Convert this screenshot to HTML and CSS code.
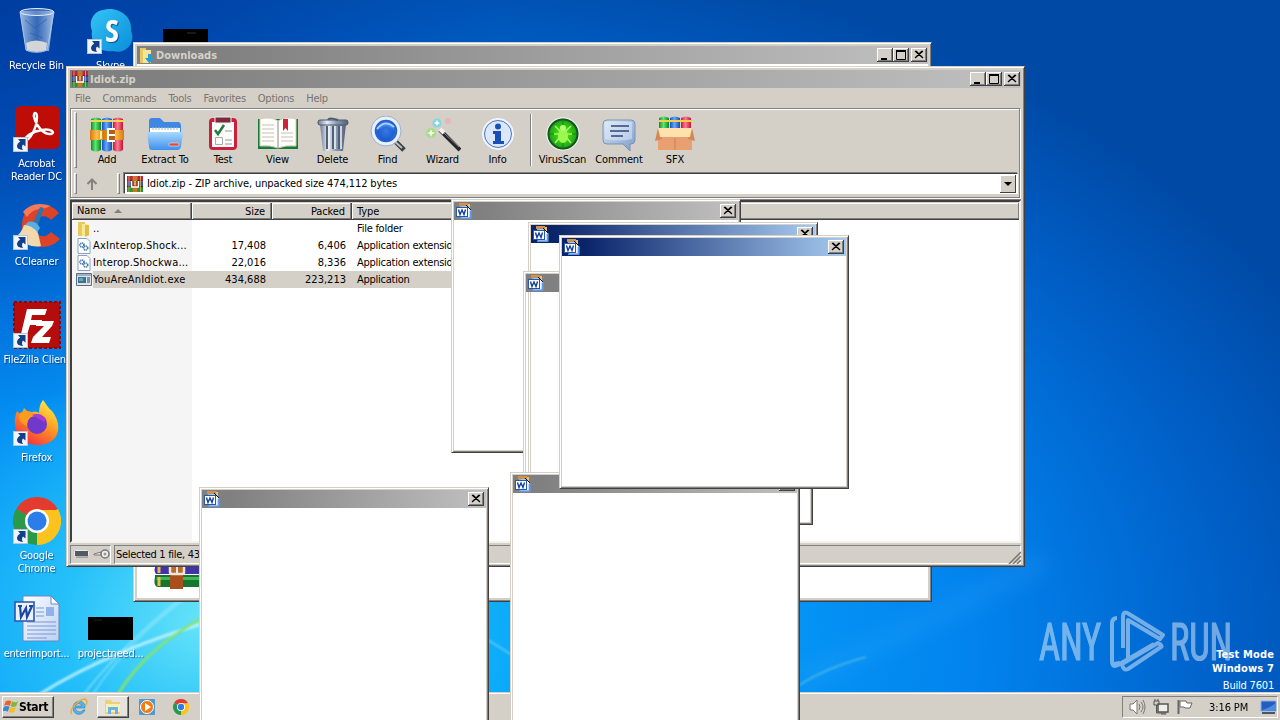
FILE: index.html
```html
<!DOCTYPE html>
<html lang="en">
<head>
<meta charset="utf-8">
<title>Desktop</title>
<link rel="stylesheet" href="styles.css">
</head>
<body>
<svg class="defs" width="0" height="0">
  <defs>
    <linearGradient id="gGreen"><stop offset="0" stop-color="#178a35"/><stop offset=".45" stop-color="#5bea6b"/><stop offset="1" stop-color="#12802c"/></linearGradient>
    <linearGradient id="gBlue"><stop offset="0" stop-color="#1c50c0"/><stop offset=".45" stop-color="#63a8ff"/><stop offset="1" stop-color="#1a48ae"/></linearGradient>
    <linearGradient id="gRed"><stop offset="0" stop-color="#c81838"/><stop offset=".45" stop-color="#ff7b92"/><stop offset="1" stop-color="#c01534"/></linearGradient>
    <linearGradient id="gBelt"><stop offset="0" stop-color="#d8780f"/><stop offset=".2" stop-color="#ffc04a"/><stop offset=".4" stop-color="#d8780f"/><stop offset=".75" stop-color="#ffbc48"/><stop offset="1" stop-color="#d8780f"/></linearGradient>
    <linearGradient id="gFolder" x2="0" y2="1"><stop offset="0" stop-color="#a9daff"/><stop offset="1" stop-color="#3f8fee"/></linearGradient>
    <linearGradient id="gSteel"><stop offset="0" stop-color="#6d7b92"/><stop offset=".3" stop-color="#e7edf4"/><stop offset=".6" stop-color="#8f9db3"/><stop offset="1" stop-color="#536078"/></linearGradient>
    <linearGradient id="gSkype" x2="1" y2="1"><stop offset="0" stop-color="#34c4f4"/><stop offset="1" stop-color="#0a8ddb"/></linearGradient>
    <linearGradient id="gFox" x1=".8" x2=".2" y2="1"><stop offset="0" stop-color="#fff14a"/><stop offset=".45" stop-color="#ff9a22"/><stop offset="1" stop-color="#f5273f"/></linearGradient>
    <radialGradient id="gLens"><stop offset="0" stop-color="#5fa6ff"/><stop offset="1" stop-color="#1450c8"/></radialGradient>
    <radialGradient id="gVirus"><stop offset="0" stop-color="#5cf020"/><stop offset="1" stop-color="#129a0c"/></radialGradient>
    <linearGradient id="gBin" x2="1"><stop offset="0" stop-color="#c8dcf2" stop-opacity=".8"/><stop offset=".5" stop-color="#5f8cc8" stop-opacity=".55"/><stop offset="1" stop-color="#d4e4f6" stop-opacity=".8"/></linearGradient>
    <linearGradient id="gNote" x2="1" y2="1"><stop offset="0" stop-color="#dce7f5"/><stop offset="1" stop-color="#7c9bc8"/></linearGradient>
    <linearGradient id="gDoc" x2="1" y2="1"><stop offset="0" stop-color="#fff"/><stop offset="1" stop-color="#bcd0f2"/></linearGradient>
  </defs>
  <symbol id="shortcut" viewBox="0 0 15 15"><rect x=".5" y=".5" width="14" height="14" fill="#f1f4f9" stroke="#b8c4d8"/><path d="M5 2h7.500v7.500L10 7.500Q8 10 10 13 3.500 12.500 4 8.500 4.500 6 7.200 4.500z" fill="#123f88"/></symbol>
  <symbol id="close" viewBox="0 0 16 14"><path d="M4 3l8 7M5 3l7 7M12 3l-8 7M11 3l-7 7" stroke="#000" stroke-width="1.100"/></symbol>
  <symbol id="min" viewBox="0 0 16 14"><path d="M4 10h6v2H4z"/></symbol>
  <symbol id="max" viewBox="0 0 16 14"><path d="M3.500 3v8.500h9V3z" fill="none" stroke="#000"/><path d="M3 2h10v2H3z"/></symbol>
  <symbol id="word" viewBox="0 0 16 16"><path d="M4 1h10v12H4z" fill="#efbf6c"/><path d="M3 0h9v3H3z" fill="#d8913d"/><path d="M5 3h6l4 4v8H5z" fill="#edf4ff" stroke="#6e97d6"/><path d="M10 2l5 5" stroke="#111"/><path d="M14.500 8v7.500H4" fill="none" stroke="#5f9ae6" stroke-width="1.600"/><rect x=".5" y="4.500" width="11" height="9" fill="#fff" stroke="#2857ad"/><path d="M2.500 6.500l1.500 5 2-4.500 2 4.500 1.500-5" fill="none" stroke="#123f9c" stroke-width="1.400"/></symbol>
  <symbol id="rar" viewBox="0 0 16 16"><path fill="#b92446" d="M0 0h16v5H0z"/><path fill="#2d57c4" d="M0 5.500h16v5H0z"/><path fill="#22963c" d="M0 11h16v5H0z"/><path fill="#4c1630" d="M0 4.500h16v1H0zM0 10h16v1H0z"/><path fill="#c9762a" d="M5.500 0h5v16h-5z"/><path d="M2 0v16M13.500 0v16" stroke="#e9b14b" stroke-width=".8"/><path d="M4.500 5v6h7V5" fill="#9c4c17" stroke="#fff" stroke-width="1.300"/><path d="M8 5v4.500" stroke="#fff"/></symbol>
  <symbol id="dll" viewBox="0 0 14 16"><path d="M1 .5h9l3 3v12H1z" fill="#fff" stroke="#8ba0bd"/><g fill="none" stroke="#4076b2" stroke-width="1.700" stroke-dasharray="1.200 .5"><circle cx="5" cy="7" r="2"/><circle cx="8.700" cy="10" r="2"/></g></symbol>
  <symbol id="exe" viewBox="0 0 16 13"><path d="M.5.500h15v12H.500z" fill="#dce3ea" stroke="#5e6e80"/><path d="M1 1h14v2H1z" fill="#9cb2cc"/><path d="M2 4h8v6H2z" fill="#3c7296"/><path d="M3 5h4v3H3z" fill="#6aab9f"/><path d="M11 4h3v6h-3z" fill="#8390a6"/></symbol>
  <symbol id="folder" viewBox="0 0 14 16"><path d="M1 1h7v14H1z" fill="#e9c95b"/><path d="M5 3h6l1 2v10H5z" fill="#f8e795"/><path d="M8 4h4v10l-4 2z" fill="#e2bd4c"/></symbol>
  <symbol id="chrome" viewBox="0 0 48 48"><path d="M24 24L3.200 12A24 24 0 0 1 44.800 12z" fill="#e33b2e"/><path d="M24 24l20.800-12A24 24 0 0 1 24 48z" fill="#fcc31e"/><path d="M24 24v24A24 24 0 0 1 3.200 12z" fill="#2a9a48"/><path d="M24 13h21a24 24 0 0 1-21 35l9.500-18.500z" fill="#fcc31e"/><path d="M3.200 12L14.500 29.500l9.500 5L24 48z" fill="#2a9a48"/><circle cx="24" cy="24" r="12" fill="#fff"/><circle cx="24" cy="24" r="9.500" fill="#2b7de9"/></symbol>
</svg>

<main class="desktop">
  <svg class="wallpaper" viewBox="0 0 1280 720">
    <defs><filter id="soft"><feGaussianBlur stdDeviation="1"/></filter><filter id="wide" x="-50%" y="-50%" width="200%" height="200%"><feGaussianBlur stdDeviation="9"/></filter></defs>
    <path d="M800 680Q890 640 1045 560" stroke="#3fb2ff" stroke-width="24" opacity=".15" fill="none" filter="url(#wide)"/>
    <g fill="none" filter="url(#soft)">
      <path d="M40 694Q110 650 215 620" stroke="#c7f4ff" stroke-width="3" opacity=".85"/>
      <path d="M84 694Q130 635 205 580" stroke="#b0f0ff" stroke-width="1.500" opacity=".7"/>
      <path d="M93 694Q128 640 190 595" stroke="#b0f0ff" stroke-width="1.500" opacity=".6"/>
      <path d="M118 694Q150 642 215 612" stroke="#84e26e" stroke-width="3"/>
      <path d="M488 640L512 655" stroke="#c7f4ff" stroke-width="2" opacity=".4"/>
      <path d="M798 686Q825 668 866 657" stroke="#7fd6e0" stroke-width="1.500" opacity=".6"/>
    </g>
  </svg>

  <section class="icons">
    <div class="shortcut r1 c1"><svg width="48" height="48"><path d="M7 4h34l-5 40H13z" fill="url(#gBin)"/><ellipse cx="24" cy="5" rx="17" ry="3.500" fill="#9fbfe2" fill-opacity=".4" stroke="#e2eefa"/><path d="M7 5l6 38c5 3 16 3 21 0l7-38" fill="none" stroke="#a9c6e8"/><path d="M13 36q10-5 21 0l-1 7q-9 4-19 0z" fill="#e3e0db" opacity=".9"/><path d="M12 13l10 8 12-9M17 26l13 5" stroke="#275a9e" fill="none" opacity=".6"/></svg><span>Recycle Bin</span></div>
    <div class="shortcut r1 c2"><svg width="48" height="48"><path d="M16 3C27-1 46 6 44 24c5 10-4 24-18 20C12 46 3 36 5 24 1 14 7 4 16 3z" fill="url(#gSkype)"/><text x="25" y="35" font-family="Open Sans" font-weight="700" font-size="31" text-anchor="middle" fill="#fff">S</text><use href="#shortcut" x="0" y="32" width="15" height="15"/></svg><span>Skype</span></div>
    <div class="shortcut r1 c3"><svg width="48" height="48"><path d="M2 22h45v23H2z" fill="#000"/><path d="M26 26h9" stroke="#333"/></svg></div>
    <div class="shortcut r2 c1"><svg width="48" height="48"><rect x="2" y="1" width="45" height="43" rx="6" fill="#bd0d06"/><path d="M12 36c5-1 12-13 12-24 0-6-4-5-3 0 2 8 9 18 17 17 5-1 0-6-9-4-9 1-18 7-17 11z" fill="none" stroke="#fff" stroke-width="2.400"/><use href="#shortcut" y="32" width="15" height="15"/></svg><span>Acrobat<br>Reader DC</span></div>
    <div class="shortcut r3 c1"><svg width="48" height="48"><path d="M46 10C35-4 10-1 9 21c-1 25 26 29 38 15l-9-7c-7 8-17 4-16-7 1-10 11-11 16-5z" fill="#dc4329"/><path d="M10 9q10-12 28-6l-8 3q-10-1-16 8z" fill="#f57a58"/><path d="M27 4l4 1-6 17-5-2z" fill="#2c75ae"/><path d="M15 19q8-2 12 6l-3 5-12-8z" fill="#58aee0"/><path d="M11 22q8 0 14 8l3 13q-11 3-26-9 6-3 9-12z" fill="#f2d8ac"/><use href="#shortcut" y="32" width="15" height="15"/></svg><span>CCleaner</span></div>
    <div class="shortcut r4 c1"><svg width="48" height="48"><rect x="1" y="1" width="46" height="46" fill="#b50d0b" stroke="#8c0708" stroke-width="2" stroke-dasharray="3 2"/><path d="M14 8h20l-2 6H19l-1 5h11l-1 5H17l-4 13H7z" fill="#fff"/><path d="M24 20h17l-2 5-10 11h9l-2 6H18l2-6 11-11h-8z" fill="#fff"/><use href="#shortcut" y="32" width="15" height="15"/></svg><span>FileZilla Client</span></div>
    <div class="shortcut r5 c1"><svg width="48" height="48"><path d="M30 1c4 5 5 8 9 11 13 17 5 34-14 34C7 46-3 29 4 12l4 4 3-7 5 5q7-3 10 0 0-8 4-13z" fill="url(#gFox)"/><circle cx="24" cy="25" r="10" fill="#7138cc"/><path d="M6 15c6-5 13-3 17 2-6 0-9 4-9 10-5-2-9-6-8-12z" fill="#ff9b21"/><path d="M19 16q7-3 14 4l-2 3q-6-4-12-7z" fill="#a93ad6"/><use href="#shortcut" y="32" width="15" height="15"/></svg><span>Firefox</span></div>
    <div class="shortcut r6 c1"><svg width="48" height="48"><use href="#chrome" width="48" height="48"/><use href="#shortcut" y="32" width="15" height="15"/></svg><span>Google<br>Chrome</span></div>
    <div class="shortcut r7 c1"><svg width="48" height="48"><path d="M10 1h28l8 8v37H10z" fill="url(#gDoc)" stroke="#6d87bd"/><path d="M38 1v8h8z" fill="#fff" stroke="#6d87bd"/><path d="M23 13h8M23 17h8M23 21h8M14 27h29M14 31h29M14 35h29M14 39h29M14 43h20" stroke="#7697d8"/><path d="M33 12h8v9h-8z" fill="#8fb2e8"/><path d="M2 7h19v19H2z" fill="#e9f0ff" stroke="#2a57ae" stroke-width="1.600"/><path d="M5 11h4M7 11l1 11 5-9 1 9 5-11h-3" fill="none" stroke="#1d479d" stroke-width="2.200"/></svg><span>enterimport...</span></div>
    <div class="shortcut r7 c2"><svg width="48" height="48"><path d="M1 22h45v23H1z" fill="#000"/><path d="M7 25h8" stroke="#222"/></svg><span>projectneed...</span></div>
  </section>

  <svg class="watermark" width="204" height="66" viewBox="0 0 204 66">
    <g fill="#fff" stroke="#fff" stroke-width="1.200" font-family="Roboto" font-size="52"><text x="1" y="51" textLength="62" lengthAdjust="spacingAndGlyphs">ANY</text><text x="132" y="51" textLength="62" lengthAdjust="spacingAndGlyphs">RUN</text></g>
    <path d="M79 9q-5 0-5 6v37q0 7 6 4l36-21M85 39V8q0-7 6-3l34 21-3 4-32-19v39M76 55l6-1M84 55l36-21q5 3 3 4L90 60q-5 2-6-5z" fill="none" stroke="#fff" stroke-width="4" stroke-linejoin="round"/>
  </svg>
  <div class="build"><b>Test Mode</b><b>Windows 7</b><span>Build 7601</span></div>

  <footer class="taskbar">
    <div class="start"><svg width="16" height="16" viewBox="0 0 17 16"><path d="M3 2q3-2 6 0L7 7Q4 5 1 7z" fill="#ee6322"/><path d="M10 2q3 2 6 0l-2 5q-3 2-6 0z" fill="#82b83a"/><path d="M1 8q3-2 6 0l-2 5q-3-2-6 0z" fill="#3a86d8"/><path d="M8 8q3 2 6 0l-2 5q-3 2-6 0z" fill="#f7bd26"/></svg>Start</div>
    <div class="task"><svg width="18" height="18" viewBox="0 0 18 18"><path d="M15 10H5q1 4 5 4 2 0 3-2h2c-3 7-12 5-12-2C3 1 16 1 15 10zM5 8h7q-3-5-7 0z" fill="#55b4ea" stroke="#257fc0" stroke-width=".6"/><path d="M2 16Q-1 14 4 8 10 1 15 1q4 2 0 7" fill="none" stroke="#e4ae34" stroke-width="1.400"/></svg></div>
    <div class="task active"><svg width="18" height="16"><path d="M1 1h6l1 2h8v12H1z" fill="#ecd177"/><path d="M2 5h14v8H2z" fill="#faf0b5"/><path d="M4 8h10v7h-3v-4H7v4H4z" fill="#66b5e6"/></svg></div>
    <div class="task"><svg width="16" height="16"><rect width="16" height="16" rx="1" fill="#4d9bd6"/><circle cx="8" cy="8" r="6.500" fill="#f47b11" stroke="#fff"/><path d="M6 4l6 4-6 4z" fill="#fff"/></svg></div>
    <div class="task"><svg width="16" height="16"><use href="#chrome" width="16" height="16"/></svg></div>
    <div class="tray">
      <svg width="17" height="16" fill="none" stroke="#777"><path d="M1 5h3l4-4v14l-4-4H1z" fill="#fff"/><path d="M10 5q2 3 0 6M12 3q4 5 0 10M14 1q4 7 0 14"/></svg>
      <svg width="17" height="16" fill="none" stroke="#555"><path d="M5 5h10v8H5z" fill="#eee" stroke-width="1.500"/><path d="M1 2h5v4H1zM2 0v2M5 0v2M3.500 6v8h10M8 15h5" /></svg>
      <svg width="17" height="16" fill="#fff" stroke="#666"><path d="M1.500 1v14" stroke-width="2"/><path d="M3 2h6l1 2h5l-2 5H8L7 8H3z"/></svg>
      <time>3:16 PM</time>
      <svg width="17" height="15"><path d="M1 1h15v10H1z" fill="#245dc0" stroke="#8ab0e8"/><path d="M1 10q7-1 15-7v8H1z" fill="#4d8bdc"/><path d="M2 12h13v2H2z" fill="#4d5563"/></svg>
    </div>
  </footer>

  <section class="window downloads">
    <header class="title gray"><svg width="15" height="17"><path d="M1 1h6v15H1z" fill="#e6c962"/><path d="M4 3h8v13H4z" fill="#f6e591"/><path d="M9 7h3v4h3l-4.500 5.500L6 11h3z" fill="#259bd8"/></svg><b>Downloads</b><i class="btn"><svg><use href="#min"/></svg></i><i class="btn"><svg><use href="#max"/></svg></i><i class="btn x"><svg><use href="#close"/></svg></i></header>
    <div class="folderview"><svg width="52" height="48" viewBox="0 0 52 48"><path d="M1 1h50v20H1z" fill="#9a2848"/><path d="M0 20h51v11H2q-3-4 0-9z" fill="#4232ac"/><path d="M1 32h50v12H4q-5-1-3-10z" fill="#16752e"/><path d="M3 34h48v3H2z" fill="#43b557"/><path d="M5 21h0v9M5 34v9" stroke="#e9bd4f" stroke-width="3"/><path d="M16 20h13v26H16z" fill="#a84f1d"/><rect x="16" y="22" width="14" height="9" rx="2" fill="#b9692c" stroke="#eee8d8" stroke-width="2.500"/><path d="M23 24v6" stroke="#eee8d8" stroke-width="2"/></svg></div>
  </section>

  <section class="window archive">
    <header class="title gray"><svg width="16" height="16"><use href="#rar"/></svg><b>Idiot.zip</b><i class="btn"><svg><use href="#min"/></svg></i><i class="btn"><svg><use href="#max"/></svg></i><i class="btn x"><svg><use href="#close"/></svg></i></header>
    <nav class="menu"><span>File</span><span>Commands</span><span>Tools</span><span>Favorites</span><span>Options</span><span>Help</span></nav>
    <div class="bars">
      <div class="toolbar">
        <i class="grip"></i>
        <div class="tool w54"><svg width="36" height="36"><path d="M2 3q5-3 10 0v31q-5 3-10 0z" fill="url(#gGreen)"/><path d="M13 3q5-3 10 0v31q-5 3-10 0z" fill="url(#gBlue)"/><path d="M24 3q5-3 10 0v31q-5 3-10 0z" fill="url(#gRed)"/><path d="M2 5h10M13 5h10M24 5h10" stroke="#f4d34e" stroke-width="2"/><path d="M1 14h34v10H1z" fill="url(#gBelt)"/><path d="M12 15v8" stroke="#fff3b0" stroke-width="2"/><path d="M26 13h-7v12h7" fill="#b06114" stroke="#fff" stroke-width="2"/><path d="M20 19h6" stroke="#fff" stroke-width="2"/></svg><span>Add</span></div>
        <div class="tool w62"><svg width="36" height="36"><path d="M2 10V5q0-3 3-3h8l4 4h14q3 0 3 4v20H2z" fill="#3f87e4"/><path d="M3 12h30v14H3z" fill="#fff"/><path d="M6 11v3M9 11v3M12 11v3M15 11v3M18 11v3M21 11v3M24 11v3M27 11v3M30 11v3" stroke="#9bb"/><path d="M0 16h36l-2 15q-1 3-3 3H5q-3 0-3-3z" fill="url(#gFolder)"/><rect x="22" y="27" width="10" height="3" rx="1" fill="#e24a36" stroke="#fff" stroke-width=".5"/></svg><span>Extract To</span></div>
        <div class="tool w54"><svg width="36" height="36"><rect x="4" y="2" width="28" height="32" rx="4" fill="#c9203c"/><path d="M7 6h22v25H7z" fill="#fbfbfa"/><path d="M10 1h16v6H10z" fill="#7c2b3b" stroke="#eee"/><path d="M10 14l3 4 6-9" fill="none" stroke="#237b3e" stroke-width="2.500"/><path d="M20 15h7M20 24h7M20 28h7" stroke="#999"/><path d="M10.500 21.500h7v7h-7z" fill="#fff" stroke="#aaa"/></svg><span>Test</span></div>
        <div class="tool w55"><svg width="42" height="36" viewBox="0 0 42 36"><path d="M1 3h40v30H1z" fill="#167c3c"/><path d="M3 3q11-3 18 2 7-5 18-2v27q-11-1-18 2-7-3-18-2z" fill="#fffefa" stroke="#d8ccb2"/><path d="M21 5v27" stroke="#888"/><path d="M5 9h12M5 13h12M5 17h12M5 21h12M5 25h12M24 17h12M24 21h12M24 25h12" stroke="#c5c0b9"/><path d="M26 3h5v12l-2.500-3-2.500 3z" fill="#cd243b"/></svg><span>View</span></div>
        <div class="tool w55"><svg width="36" height="36"><path d="M5 8h26l-3 27H8z" fill="url(#gSteel)"/><path d="M12 10v23M18 10v23M24 10v23" stroke="#506076" stroke-width="2"/><path d="M14 10v23M20 10v23M26 10v23" stroke="#edf3f8" stroke-width="1.500"/><rect x="3" y="4" width="30" height="5" rx="2" fill="url(#gSteel)" stroke="#4d5b72"/><path d="M13 4q1-3 10 0" fill="none" stroke="#4d5b72" stroke-width="2"/></svg><span>Delete</span></div>
        <div class="tool w55"><svg width="36" height="36"><path d="M24 24l10 10" stroke="#3c4047" stroke-width="5"/><path d="M23 24l9 8" stroke="#b6bdc5" stroke-width="2"/><circle cx="16" cy="15" r="13" fill="url(#gLens)" stroke="#e8f0fa" stroke-width="3.500"/><circle cx="16" cy="15" r="15" fill="none" stroke="#9eb1c9"/><path d="M7 16q9-11 18 0-4 10-11 9-5-2-7-9z" fill="#0d4bc6" opacity=".5"/><path d="M7 13q8-10 17-2" stroke="#a6ceff" stroke-width="2" fill="none"/></svg><span>Find</span></div>
        <div class="tool w55"><svg width="36" height="36"><path d="M15 14l20 20" stroke="#28282c" stroke-width="4"/><path d="M15 13l4 4" stroke="#f0f0ef" stroke-width="4"/><path d="M19 17l15 14" stroke="#85868b"/><circle cx="6" cy="17" r="5" fill="#82e850" opacity=".55"/><circle cx="12" cy="7" r="4.500" fill="#51daf4" opacity=".6"/><circle cx="23" cy="5" r="3" fill="#f69eae" opacity=".55"/><path d="M6 13l1 3 3 1-3 1-1 3-1-3-3-1 3-1zM12 4l1 2 2 1-2 1-1 2-1-2-2-1 2-1z" fill="#fff"/></svg><span>Wizard</span></div>
        <div class="tool w55"><svg width="36" height="36"><circle cx="18" cy="18" r="15.500" fill="#e7edfa" stroke="#f8faff" stroke-width="1"/><circle cx="18" cy="18" r="13.500" fill="#dbe7fa" stroke="#4875d0"/><circle cx="18" cy="10.500" r="3" fill="#194fb6"/><path d="M13 15h8v10h3v3H13v-3h2v-7h-2z" fill="#194fb6"/></svg><span>Info</span></div>
        <i class="split"></i>
        <div class="tool w55"><svg width="36" height="36"><circle cx="18" cy="18" r="16" fill="url(#gVirus)" stroke="#e9f4e8" stroke-width="1.500"/><circle cx="18" cy="18" r="14.500" fill="none" stroke="#19532a" stroke-width="2"/><path d="M5 18h26M18 5v26" stroke="#0d8b0e"/><path d="M10 10l5 5M26 10l-5 5M9 18h6M27 18h-6M10 27l5-6M26 27l-5-6" stroke="#a7ff67" stroke-width="1.500"/><ellipse cx="18" cy="20" rx="5" ry="7" fill="#9bf94e"/><circle cx="18" cy="12" r="3" fill="#b7ff75"/></svg><span>VirusScan</span></div>
        <div class="tool w58"><svg width="36" height="36"><path d="M6 4h24q4 0 4 4v16q0 4-4 4h-1v7l-7-7H6q-4 0-4-4V8q0-4 4-4z" fill="url(#gNote)" stroke="#7993ba"/><path d="M4 7q4-3 27-1v17q-13 3-27 0z" fill="#e2ecfa" opacity=".5"/><path d="M10 10h18M9 15h19M10 20h12" stroke="#2f4778" stroke-width="1.500"/></svg><span>Comment</span></div>
        <div class="tool w54"><svg width="40" height="36" viewBox="0 0 40 36"><path d="M4 2q5-3 10 0v12H4z" fill="url(#gGreen)"/><path d="M15 2q5-3 10 0v12H15z" fill="url(#gBlue)"/><path d="M26 2q5-3 10 0v12H26z" fill="url(#gRed)"/><path d="M4 5h32" stroke="#f6d044" stroke-width="2"/><path d="M3 12h34v22H3z" fill="#e9a071"/><path d="M3 12L0 25l7-2M37 12l3 13-7-2" fill="#d38656"/><path d="M3 12h34l-2 9H5z" fill="#ffe1ad"/><path d="M20 22v12" stroke="#c68055"/></svg><span>SFX</span></div>
      </div>
      <div class="address">
        <i class="grip"></i><svg class="up" width="14" height="14"><path d="M7 13V3M2.500 7L7 2.500 11.500 7" fill="none" stroke="#85827d" stroke-width="2"/></svg><i class="grip second"></i>
        <div class="combo"><svg width="16" height="16"><use href="#rar"/></svg><span>Idiot.zip - ZIP archive, unpacked size 474,112 bytes</span><i class="drop"></i></div>
      </div>
    </div>
    <div class="list">
      <div class="row head"><span>Name<i class="sort"></i></span><span>Size</span><span>Packed</span><span>Type</span></div>
      <div class="row"><span><svg width="14" height="16"><use href="#folder"/></svg>..</span><span></span><span></span><span>File folder</span></div>
      <div class="row"><span><svg width="14" height="16"><use href="#dll"/></svg>AxInterop.Shock...</span><span>17,408</span><span>6,406</span><span>Application extension</span></div>
      <div class="row"><span><svg width="14" height="16"><use href="#dll"/></svg>Interop.Shockwa...</span><span>22,016</span><span>8,336</span><span>Application extension</span></div>
      <div class="row selected"><span><svg width="16" height="13"><use href="#exe"/></svg>YouAreAnIdiot.exe</span><span>434,688</span><span>223,213</span><span>Application</span></div>
    </div>
    <div class="status"><div class="cell marks"><svg width="16" height="10"><rect x=".5" y="1.500" width="14" height="6" rx="1" fill="#525b60" stroke="#eee"/><path d="M2 8h12" stroke="#777"/></svg><svg width="17" height="12"><path d="M1 6l7-2v3H1z" fill="#eee" stroke="#777"/><circle cx="12" cy="6" r="4" fill="#eee" stroke="#777" stroke-width="1.500"/><circle cx="12" cy="6" r="1.500" fill="#999"/></svg></div><div class="cell">Selected 1 file, 434,688 bytes</div><svg class="resize" width="13" height="13"><path d="M1 13L13 1M5 13l8-8M9 13l4-4" stroke="#77736e" stroke-width="1.500"/></svg></div>
  </section>

  <section class="window popup pa"><header class="title gray"><svg width="16" height="16"><use href="#word"/></svg><i class="btn x"><svg><use href="#close"/></svg></i></header></section>
  <section class="window popup pb"><header class="title blue"><svg width="16" height="16"><use href="#word"/></svg><i class="btn x"><svg><use href="#close"/></svg></i></header></section>
  <section class="window popup pc"><header class="title gray"><svg width="16" height="16"><use href="#word"/></svg><i class="btn x"><svg><use href="#close"/></svg></i></header><div class="ghost"></div></section>
  <section class="window popup pd"><header class="title gray"><svg width="16" height="16"><use href="#word"/></svg><i class="btn x"><svg><use href="#close"/></svg></i></header></section>
  <section class="window popup pe"><header class="title gray"><svg width="16" height="16"><use href="#word"/></svg><i class="btn x"><svg><use href="#close"/></svg></i></header></section>
  <section class="window popup pf"><header class="title blue"><svg width="16" height="16"><use href="#word"/></svg><i class="btn x"><svg><use href="#close"/></svg></i></header></section>
</main>
</body>
</html>
```
FILE: styles.css
```css
* { box-sizing: border-box; }
body { margin: 0; font: 11px/13px "DejaVu Sans Condensed", "DejaVu Sans", sans-serif; font-stretch: condensed; letter-spacing: -0.3px; color: #000; }
svg { display: block; flex: none; }
i { display: block; font-style: normal; }
.defs { position: absolute; }
.desktop {
  position: relative; width: 1280px; height: 720px; overflow: hidden;
  background:
    radial-gradient(ellipse 500px 420px at 0 0, rgba(0,56,158,.75), rgba(0,56,158,.55) 40%, rgba(0,70,180,0) 100%),
    radial-gradient(ellipse 330px 260px at 210px 620px, rgba(110,232,248,.95), rgba(50,205,250,.7) 45%, rgba(0,160,250,0) 100%),
    radial-gradient(ellipse 1060px 700px at 360px 640px, #08adfc 0%, #069ff9 30%, #0283ee 58%, #0060c8 82%, #004aa6 100%);
}
.wallpaper { position: absolute; inset: 0; width: 1280px; height: 720px; }

/* desktop icons */
.icons { position: absolute; left: 0; top: 7px; display: grid; grid-template-columns: 73px 75px 74px; grid-template-rows: repeat(7, 98px); color: #fff; }
.shortcut { display: flex; flex-direction: column; align-items: center; gap: 4px; text-align: center; white-space: nowrap; text-shadow: 1px 1px 1px rgba(0,30,90,.6); min-width: 0; letter-spacing: -0.2px; }
.r1 { grid-row: 1; } .r2 { grid-row: 2; } .r3 { grid-row: 3; } .r4 { grid-row: 4; } .r5 { grid-row: 5; } .r6 { grid-row: 6; } .r7 { grid-row: 7; }
.c1 { grid-column: 1; } .c2 { grid-column: 2; } .c3 { grid-column: 3; }
.watermark { position: absolute; left: 1038px; top: 609px; opacity: .45; }
.build { position: absolute; right: 6px; top: 648px; display: flex; flex-direction: column; align-items: flex-end; line-height: 14px; color: #fff; letter-spacing: -0.2px; }
.build b { letter-spacing: 0.15px; }
.build span { margin-top: 3px; }

/* taskbar */
.taskbar { position: absolute; left: 0; right: 0; bottom: 0; height: 27px; display: flex; align-items: flex-start; background: #d4d0c8; border-top: 1px solid #fff; box-shadow: 0 -1px #d4d0c8; padding: 2px 2px 0; }
.start, .task { height: 22px; display: flex; align-items: center; justify-content: center; }
.start { width: 52px; justify-content: flex-start; font-weight: bold; font-size: 12px; border: 1px solid; border-color: #fff #404040 #404040 #fff; box-shadow: inset -1px -1px #808080; margin-right: 9px; }
.task { width: 32px; margin-right: 2px; }
.active { border: 1px solid; border-color: #fff #404040 #404040 #fff; background: #e6e3de; box-shadow: inset -1px -1px #808080; }
.tray { margin-left: auto; width: 156px; height: 22px; display: flex; align-items: center; gap: 7px; padding-left: 6px; border: 1px solid; border-color: #808080 #fff #fff #808080; }
.tray time { margin: 0 2px 0 8px; width: 42px; white-space: nowrap; letter-spacing: -0.1px; }

/* windows */
.window { position: absolute; background: #d4d0c8; border: 1px solid; border-color: #d4d0c8 #404040 #404040 #d4d0c8; box-shadow: inset 1px 1px #fff, inset -1px -1px #808080; display: flex; flex-direction: column; }
.title { height: 18px; flex: none; display: flex; align-items: center; padding: 0 2px; color: #d4d0c8; letter-spacing: 0; }
.title b { margin-left: 2px; }
.gray { background: linear-gradient(90deg, #808080 10%, #c0c0c0); }
.blue { background: linear-gradient(90deg, #0a246a 8%, #a6caf0); }
.btn { width: 16px; height: 14px; background: #d4d0c8; box-shadow: inset -1px -1px #404040, inset 1px 1px #fff, inset -2px -2px #808080; color: #000; }
.btn svg { width: 16px; height: 14px; }
.title b + .btn { margin-left: auto; }
.btn.x { margin-left: 2px; }
.popup .btn.x { margin-left: auto; }
.downloads { left: 133px; top: 42px; width: 799px; height: 560px; padding: 3px; }
.downloads .title { padding: 0 1px 0 2px; }
.downloads .title b { margin-left: 2px; }
.folderview { flex: 1; background: #fff; padding: 479px 0 0 17px; }
.archive { left: 66px; top: 66px; width: 959px; height: 501px; padding: 3px; }
.archive .title { padding-right: 1px; }

.menu { height: 20px; flex: none; display: flex; align-items: center; gap: 12px; padding-left: 5px; color: #77736e; letter-spacing: -0.25px; }
.bars { flex: none; height: 90px; border: 1px solid #808080; box-shadow: inset 1px 1px #fff, 1px 1px #fff; margin-right: 1px; padding: 3px 1px 3px 3px; }
.toolbar { height: 60px; display: flex; }
.grip { width: 3px; height: 56px; border: 1px solid; border-color: #fff #808080 #808080 #fff; margin-right: 3px; flex: none; }
.tool { display: flex; flex-direction: column; align-items: center; gap: 1px; padding-top: 4px; white-space: nowrap; flex: none; letter-spacing: -0.15px; }
.w54 { width: 54px; } .w55 { width: 55px; } .w58 { width: 58px; } .w62 { width: 62px; }
.split { width: 2px; height: 52px; margin: 2px 3px 0 5px; border-left: 1px solid #808080; border-right: 1px solid #fff; flex: none; }
.address { height: 23px; display: flex; align-items: center; }
.address .grip { height: 21px; margin-right: 8px; }
.address .grip.second { margin: 0 4px 0 18px; }
.combo { flex: 1; height: 21px; display: flex; align-items: center; gap: 4px; padding: 1px 1px 1px 2px; background: #fff; border: 1px solid; border-color: #404040 #fff #fff #404040; box-shadow: -1px -1px #808080; letter-spacing: -0.1px; }
.drop { margin-left: auto; width: 16px; height: 18px; background: #d4d0c8; box-shadow: inset -1px -1px #404040, inset 1px 1px #fff; display: flex; align-items: center; justify-content: center; }
.drop::after { content: ""; border: 4px solid transparent; border-top-color: #000; border-bottom: 0; }

.list { flex: none; height: 343px; margin-top: 2px; border: 2px solid; border-color: #404040 #f4f2ec #f4f2ec #404040; background: linear-gradient(90deg, #f5f5f5 120px, #fff 120px); box-shadow: 0 -1px #808080; overflow: hidden; }
.row { height: 17px; display: grid; grid-template-columns: 120px 80px 80px 1fr; align-items: center; white-space: nowrap; letter-spacing: 0; }
.row > span { padding-right: 6px; text-align: right; }
.row > span:first-child { display: flex; align-items: center; gap: 1px; padding: 0 0 0 5px; height: 17px; letter-spacing: 0.2px; }
.row > span:last-child { text-align: left; padding-left: 5px; letter-spacing: -0.25px; }
.row svg { margin-right: 1px; }
.row.head { height: 18px; background: #d4d0c8; border-bottom: 1px solid #404040; box-shadow: inset 0 -1px #808080; }
.row.head > span { height: 16px; line-height: 17px; border-right: 1px solid #404040; box-shadow: inset -1px 0 #808080, inset 1px 1px #fff; letter-spacing: -0.1px; }
.row.head > span:last-child { border: 0; }
.sort { border: 4px solid transparent; border-bottom-color: #858079; border-top: 0; margin-left: 7px; }
.selected { width: 380px; background: linear-gradient(90deg, transparent 21px, #d4d0c8 21px); }
.selected span:first-child { padding-left: 4px; }
.row.selected svg { margin-right: 0; }

.status { flex: none; display: flex; height: 20px; margin-top: 1px; gap: 3px; align-items: center; }
.cell { height: 19px; flex: 1; border: 1px solid; border-color: #808080 #fff #fff #808080; padding: 2px 1px; white-space: nowrap; }
.marks { flex: none; width: 41px; display: flex; align-items: center; gap: 3px; padding-left: 3px; }
.resize { margin-left: -16px; align-self: flex-end; }

/* pop-up windows */
.popup { width: 290px; height: 254px; background: #fff; padding: 2px; border-color: #d4d0c8 #404040 #404040 #d4d0c8; box-shadow: inset 1px 1px #fff, inset -1px -1px #808080, inset 2px 2px #d4d0c8, inset -2px -2px #d4d0c8; }
.pa { left: 451px; top: 199px; }
.pb { left: 528px; top: 222px; }
.pc { left: 523px; top: 271px; }
.pd { left: 510px; top: 472px; }
.pe { left: 199px; top: 487px; }
.pf { left: 559px; top: 235px; }
.ghost { flex: 1; width: 3px; margin-left: 2px; border-left: 1px solid #d4d0c8; border-right: 1px solid #d4d0c8; }
```
